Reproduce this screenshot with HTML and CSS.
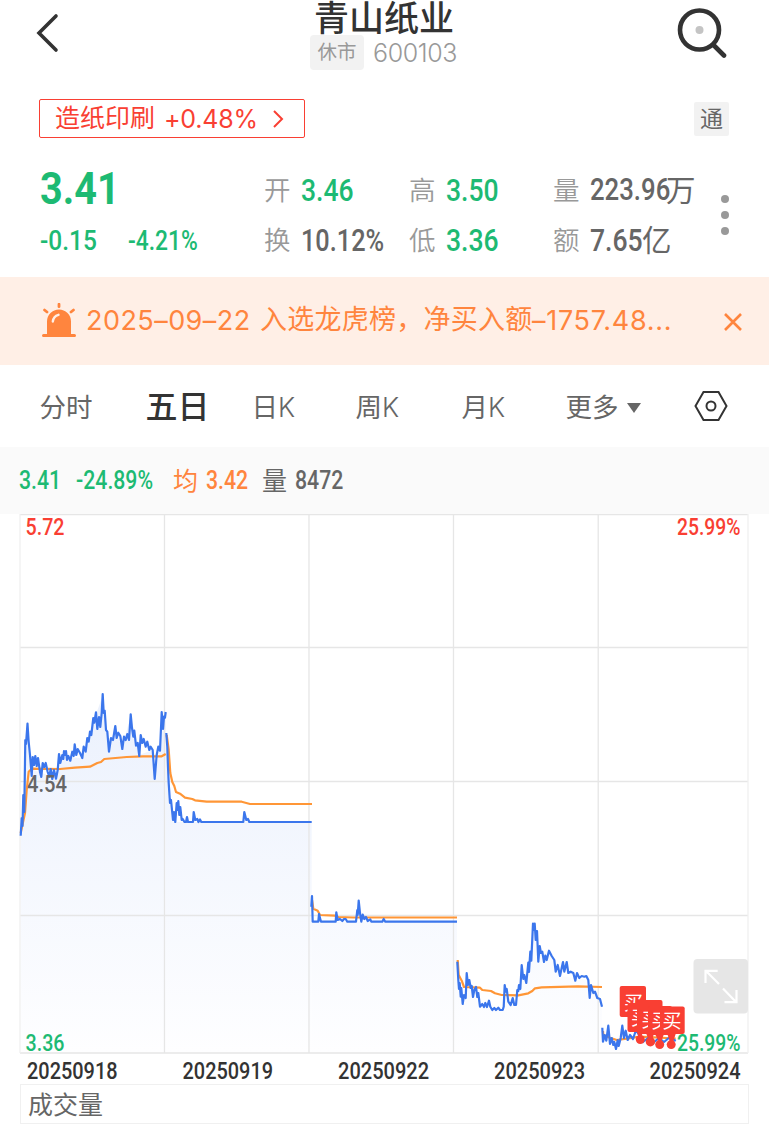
FILE: index.html
```html
<!DOCTYPE html>
<html lang="zh-CN">
<head>
    <meta charset="UTF-8">
    <meta name="viewport" content="width=device-width, initial-scale=1.0">
    <title>青山纸业 600103</title>
    <link rel="stylesheet" href="styles.css">
</head>
<body>
    <header class="header">
        <svg class="back" width="24" height="40" viewBox="0 0 24 40"><path d="M20 3L3 20l17 17"/></svg>
        <div class="stock">
            <h1>青山纸业</h1>
            <div class="code"><span class="badge">休市</span><span class="code-num">600103</span></div>
        </div>
        <svg class="search" width="52" height="52" viewBox="0 0 52 52">
            <circle cx="23.5" cy="24" r="19.5"/>
            <path d="M37.500 39L48 49.500"/>
            <circle class="dot" cx="23.500" cy="24" r="4"/>
        </svg>
    </header>

    <div class="sector-row">
        <div class="sector">
            <span class="sector-name">造纸印刷</span><span class="sector-num">+0.48%</span>
            <svg width="12" height="20" viewBox="0 0 12 20"><path d="M2 2l8 8-8 8"/></svg>
        </div>
        <span class="tong">通</span>
    </div>

    <section class="quote">
        <div class="price"><span class="num big">3.41</span></div>
        <div class="cell"><label>开</label><span class="num green">3.46</span></div>
        <div class="cell"><label>高</label><span class="num green">3.50</span></div>
        <div class="cell"><label>量</label><span class="num vol">223.96</span><span class="unit">万</span></div>
        <div class="change"><span class="num diff">-0.15</span><span class="num">-4.21%</span></div>
        <div class="cell"><label>换</label><span class="num pct">10.12%</span></div>
        <div class="cell"><label>低</label><span class="num green">3.36</span></div>
        <div class="cell"><label>额</label><span class="num amount">7.65</span><span class="unit">亿</span></div>
        <div class="dots"><i></i><i></i><i></i></div>
    </section>

    <div class="notice">
        <svg class="alarm" width="34" height="36" viewBox="0 0 34 36">
            <path d="M5 31V18.500a12 12 0 0 1 24 0V31h3.500a1.500 1.500 0 0 1 0 3h-31a1.500 1.500 0 0 1 0-3z"/>
            <path class="ray" d="M17 1.200v2.500M2.500 7l2.500 2M31.500 7L29 9"/>
            <path class="shine" d="M10.800 18.500c.4-3.500 2.600-5.800 5.700-6.700"/>
        </svg>
        <p><span class="date">2025–09–22</span><span class="event">入选龙虎榜，净买入额</span><span class="money">–1757.48...</span></p>
        <svg class="close" width="20" height="20" viewBox="0 0 20 20"><path d="M2 2l16 16M18 2L2 18"/></svg>
    </div>

    <nav class="tabs">
        <span>分时</span>
        <span class="active">五日</span>
        <span>日<b>K</b></span>
        <span>周<b>K</b></span>
        <span>月<b>K</b></span>
        <span>更多<i class="arrow"></i></span>
        <svg width="34" height="32" viewBox="0 0 34 32">
            <path d="M9.500 2h15L32.500 16l-8 14h-15L1.500 16z"/>
            <circle cx="17" cy="16" r="4.500"/>
        </svg>
    </nav>

    <div class="summary">
        <span class="num s1">3.41</span>
        <span class="num s2">-24.89%</span>
        <span class="avg">均</span>
        <span class="num avg s3">3.42</span>
        <span class="hand">量</span>
        <span class="num hand">8472</span>
    </div>

    <div class="chart">
        <svg width="769" height="570" viewBox="0 514 769 570">
            <defs>
                <linearGradient id="fade" gradientUnits="userSpaceOnUse" x1="0" y1="694" x2="0" y2="1053">
                    <stop offset="0" stop-color="#ebf1fd"/>
                    <stop offset="1" stop-color="#fefeff"/>
                </linearGradient>
                <!-- five days of prices, one run per day -->
                <path id="d1" d="M20.700 835.700L21.700 818 22.500 826 23.300 795 24.300 812 25.300 740 26 744 27.500 723.500 28.600 741 30 755 31.700 776 32.700 757 34 765 35.300 756 36.700 766 38 758 40 772 41.300 777 42.700 763 44.300 767 45.700 763 47.700 772 49.300 776.700 50.700 769 52.300 779 54 770 56 778.700 57.700 770 59 754 60.300 763 62.300 755 63.300 759 64 751 65 755 66 751 67 760 68.300 756 70.300 760.700 72.300 751.700 73.700 756 74.700 744.300 76.300 755 77.700 749 80 753 82.300 758 83.700 746.700 85.700 751.700 87.300 738 88.700 741.700 90 731.700 91.300 735 93.300 718 94.300 722.700 96 712.300 97.300 729 99 717 100.300 727 101.700 713 102.700 694 103.700 713 104.700 710.700 106 730 107.300 731.700 109 751.700 111 738 113 740 115.300 726 116.700 738 118.300 732.700 120.300 736 122.300 749 124 736.700 125.700 740 127.300 734 129 740 130.700 714.300 132 728 133.300 736.700 134.300 730.700 136 745.700 137.700 743 139.300 756 140.700 735 142.300 743 143.700 739 145.700 746.700 147.300 741.700 149.300 750 150.700 746.700 152.700 750 154.700 779 156.700 755 158.300 746.700 160 750.700 161.700 712 163 729 164 716.700 165 717.700 165.700 712"/>
                <path id="d2" d="M166.300 733L167.300 747 168 767 168.700 783 170 803 171 800 172 810 173 820 174 812 175.300 822 176.700 803 177.300 810 178.300 801 179.300 815 180.300 807 181.700 820 182.700 819 184.500 822 186 822 187 817 188 822 193 822 193.700 812 195.300 820 197.300 819 198.500 822 200 819.500 201.300 822 243.300 822 244.300 812 246.300 820 248 819 249.300 822 311.700 822"/>
                <path id="d3" d="M311.300 906.700L312 896 312.700 921.700 318.300 921.700 319 914 320 918 321 921.700 335.700 921.700 336.300 912.300 337.700 920 340 919 342.300 921 344 919 345.700 919 347.300 921.700 356 921.700 357.300 910 357.700 915 358.700 900.700 360 913 361.300 921.700 362.700 914.700 364.300 919 366 917 367.700 921 370.300 919.300 371.300 921.700 382.300 921.700 383.700 919 385.300 921.700 457 921.700"/>
                <path id="d4" d="M457.300 961.700L458.300 980 459 989 459.700 983 460.700 996.700 461.300 988 462.700 1004 464 995 465.700 998 466.700 973 468 985 469.300 980 470.700 988 471.700 986 473 997 474.300 990 476 987 477.300 997 478.300 993 480 1006.700 482.300 1004 484 1007 485.300 1003 487 1007 489 1000.700 490.300 1006.700 492.300 1010 494.300 1008 496 1010 498.300 1007.700 500 1010 502.700 1010 503.700 1006.700 504.700 985 505.700 991.700 506.700 989 508.300 1001.700 510.700 1005 512.700 998 514.300 1005 516 1005 517.300 990 518.300 991 519 985 520.300 989 521.700 965 523.300 979 524.300 975 526.300 983 528.300 962.700 529 972 530.300 951.700 531.300 960.700 533 923.500 534 930 534.700 923.500 535.700 940 537 931 538.300 961.700 539.700 946 541 953 542.300 951.700 544 962 545.300 955.700 546.700 960 549 950.700 551.700 956 554.300 960 555.700 971.700 557.700 965 560 976 561.700 968 563 962 564.300 971.700 566.700 962 568.300 973 570.700 971.700 573.300 973 575.300 980.700 577 973 579.300 978 581.700 976 584.300 976.700 586.300 976 588.300 980 589.700 998 591 985 593.300 993 595 991.700 597.300 998 600 999 602 1006.700"/>
                <path id="d5" d="M602.300 1027.700L603 1041.700 604.700 1035 606.300 1040.700 608.300 1025.700 610 1044 611.700 1038 613.300 1045 614.300 1042 616 1049 617.700 1040 618.700 1046 620.700 1038 622.300 1025.700 624 1038 625.700 1030.700 627.700 1040 630 1035 633 1039 636 1030 639 1035 643 1042 648 1038 653 1043 659 1038 664 1042 670 1037 675.700 1041"/>
            </defs>

            <g class="fill">
                <path d="M20.700 1053V835.700L23.300 795 27.500 723.500 32 770 40 772 56 779 59 757 82 758 96 714 102.700 696 109 750 115 728 122 748 130.700 716 139 755 152.700 750 154.700 779 163 727 165.700 712V1053z"/>
                <path d="M165.700 1053V733L170 803 175.300 822H311.700V1053z"/>
                <path d="M311.700 1053V921.700H457V1053z"/>
                <path d="M457 1053V961.700L462.700 1004 466.700 980 480 1006 503 1010 505 991 515 1005 521.700 970 526 983 533 924 538 955 549 952 560 976 588 980 602 1007V1053z"/>
                <path d="M602 1053V1030L616 1047 623 1032 640 1037 675 1041V1053z"/>
            </g>

            <path class="grid" d="M20 514.500H748M20 647.500H748M20 781.500H748M20 915.500H748M20 1053H748M164.500 514V1053M309 514V1053M453.500 514V1053M598.200 514V1053"/>
            <path class="edge" d="M20 514V1053M748 514V1053"/>

            <g class="line average">
                <path d="M20.700 833L25 813 26.700 790 28.700 771.700 31.700 768.700 60 769 75 767.600 90 766.700 97.300 763 101 762 104.300 759 126.700 757 143 756.300H161.700L165.700 754"/>
                <path d="M166.700 735L168.700 750 170.300 773 172.300 782 174.300 786 176 792 180 793.700 185 797.700 192.300 799 195 800.300 206.700 801.700H241.700L250 804H312"/>
                <path d="M312 900L313.300 908.700 317.700 910.700 320 915 335 915.700 338.300 917 353 917.500H457"/>
                <path d="M457.700 960L458.700 975 461.700 980.700 464 987 480 987.700 482.300 990 491 991 495 993.300 501.700 995 518.300 995.300 528.300 993.300 532.300 991 535 988.300 541.700 987.300 578 986.300 602 987"/>
                <path d="M603 1031L603.300 1035 610 1037.700 616.700 1040 626.700 1038.700 640 1036.700 675.700 1038.500"/>
            </g>
            <g class="line price-line">
                <use href="#d1"/><use href="#d2"/><use href="#d3"/><use href="#d4"/><use href="#d5"/>
            </g>
            <text class="mid" x="27" y="792" textLength="40" lengthAdjust="spacingAndGlyphs">4.54</text>

            <!-- buy marks -->
            <g class="buy">
                <rect x="619.700" y="986" width="26.300" height="31" rx="2"/><text x="624" y="1010">买</text>
                <rect x="627.500" y="1003" width="26" height="29" rx="2"/><text x="631" y="1025">买</text>
                <path d="M637 1031h6l-2 8h-2z"/><circle cx="640.300" cy="1039.500" r="4.500"/>
                <rect x="637" y="1000" width="25.500" height="34" rx="2"/><text x="641.500" y="1027">买</text>
                <path d="M646 1033h8l-2 8h-3z"/><circle cx="650.400" cy="1041.700" r="4.700"/>
                <rect x="648" y="1006" width="24" height="29" rx="2"/><text x="651.500" y="1028">买</text>
                <path d="M655 1034h9l-3 8h-2z"/><circle cx="659.700" cy="1044.600" r="4.500"/>
                <rect x="660" y="1006.500" width="24.700" height="27.500" rx="2"/><text x="662.500" y="1027.500">买</text>
                <path d="M667 1033h9l-3 9h-3z"/><circle cx="671.200" cy="1044.600" r="4.500"/>
            </g>

            <g class="expand">
                <rect x="693.500" y="959" width="54.500" height="54.500" rx="4"/>
                <path d="M719 984L706 971M705.500 983V970.800H717.700M723 988.500L736 1002M736.500 990V1002.200H724.500"/>
            </g>

            <text class="up" x="25.500" y="534.500" textLength="39" lengthAdjust="spacingAndGlyphs">5.72</text>
            <text class="up" x="677" y="534.500" textLength="63.500" lengthAdjust="spacingAndGlyphs">25.99%</text>
            <text class="down" x="25.500" y="1051" textLength="39" lengthAdjust="spacingAndGlyphs">3.36</text>
            <text class="down" x="677" y="1051" textLength="63.500" lengthAdjust="spacingAndGlyphs">25.99%</text>

            <g class="days">
                <text x="27" y="1078.500" textLength="90.500" lengthAdjust="spacingAndGlyphs">20250918</text>
                <text x="182.500" y="1078.500" textLength="90.500" lengthAdjust="spacingAndGlyphs">20250919</text>
                <text x="338" y="1078.500" textLength="91" lengthAdjust="spacingAndGlyphs">20250922</text>
                <text x="494" y="1078.500" textLength="91" lengthAdjust="spacingAndGlyphs">20250923</text>
                <text x="649.500" y="1078.500" textLength="91" lengthAdjust="spacingAndGlyphs">20250924</text>
            </g>
        </svg>
    </div>

    <div class="volume">成交量</div>
</body>
</html>
```
FILE: styles.css
```css
*{
    margin: 0;
    padding: 0;
    box-sizing: border-box;
}

:root{
    --green: #1dba73;
    --red: #f93f33;
    --orange: #ff853e;
    --gray: #666;
}

body{
    width: 769px;
    height: 1124px;
    overflow: hidden;
    background: #fff;
    color: #333;
    font-family: Inter, 'Noto Sans CJK SC', sans-serif;
}

svg{
    display: block;
    flex: none;
    fill: none;
}

i, b{
    font-style: normal;
    font-weight: inherit;
}

/* narrow digits */
.num{
    display: inline-block;
    font-family: Roboto, 'Liberation Sans', sans-serif;
    font-weight: 500;
    white-space: nowrap;
    transform: scaleX(.83);
    transform-origin: 0 50%;
}

.header{
    display: flex;
    height: 85px;
    padding: 0 41px 0 36px;
}

.back{
    margin-top: 13px;
    stroke: #333;
    stroke-width: 3.6;
    stroke-linecap: round;
}

.stock{
    flex: 1;
    padding-left: 250px;
}

h1{
    height: 35px;
    padding-left: 4px;
    font-size: 35px;
    font-weight: 500;
    line-height: 37px;
    white-space: nowrap;
}

.code{
    display: flex;
    align-items: center;
    gap: 9px;
    height: 35px;
    color: #999;
}

.badge{
    width: 54px;
    height: 35px;
    border-radius: 4px;
    background: #f2f2f2;
    font-size: 19.5px;
    line-height: 35px;
    text-align: center;
}

.code-num{
    font-size: 25px;
    font-weight: 300;
    letter-spacing: -.4px;
}

.search{
    margin-top: 6px;
    stroke: #333;
    stroke-width: 4.6;
    stroke-linecap: round;
}

.search .dot{
    fill: #c4c4c4;
    stroke: none;
}

.sector-row{
    display: flex;
    justify-content: space-between;
    height: 65px;
    padding: 14px 40px 0 39px;
}

.sector{
    display: flex;
    align-items: center;
    width: 266px;
    height: 39px;
    padding-left: 15px;
    border: 1.5px solid var(--red);
    border-radius: 2px;
    color: var(--red);
    font-size: 25px;
}

.sector-name{
    width: 101px;
    line-height: 34px;
    margin-top: -2px;
}

.sector-num{
    width: 116px;
    padding-left: 8px;
    letter-spacing: -.2px;
}

.sector svg{
    stroke: var(--red);
    stroke-width: 2;
}

.tong{
    width: 35px;
    height: 34px;
    margin-top: 3px;
    border-radius: 2px;
    background: #f2f2f2;
    color: var(--gray);
    font-size: 23px;
    line-height: 35px;
    text-align: center;
}

.quote{
    position: relative;
    display: grid;
    grid-template-columns: 224px 145px 144px 1fr;
    grid-template-rows: 50px 50px;
    height: 127px;
    padding: 15px 0 0 40px;
    align-items: center;
}

.price, .change{
    color: var(--green);
}

.price{
    height: 50px;
    line-height: 50px;
}

.big{
    font-size: 43.5px;
    font-weight: 700;
    transform: scaleX(.91);
}

.change{
    display: flex;
    font-size: 27.5px;
}

.change .num{
    width: 88px;
}

.change .diff{
    transform: scaleX(.89);
}

.cell{
    display: flex;
    align-items: center;
    height: 50px;
    color: var(--gray);
    font-size: 32px;
    line-height: 50px;
}

.cell label{
    width: 37px;
    color: #999;
    font-size: 26.5px;
    font-weight: 350;
}

.green{
    color: var(--green);
}

.pct{
    transform: scaleX(.79);
}

.vol{
    width: 76px;
    font-size: 31px;
}

.amount{
    width: 52px;
}

.unit{
    font-size: 29.5px;
}

.dots{
    position: absolute;
    top: 45px;
    left: 721px;
    display: grid;
    gap: 8px;
}

.dots i{
    width: 8px;
    height: 8px;
    border-radius: 50%;
    background: #999;
}

.notice{
    display: flex;
    align-items: center;
    height: 88px;
    padding: 0 26px 0 42px;
    background: #ffefe6;
    color: var(--orange);
}

.alarm{
    fill: var(--orange);
}

.ray{
    stroke: var(--orange);
    stroke-width: 2.8;
    stroke-linecap: round;
}

.shine{
    fill: none;
    stroke: #ffefe6;
    stroke-width: 2.4;
    stroke-linecap: round;
}

.notice p{
    display: flex;
    flex: 1;
    align-items: center;
    padding-left: 10px;
    font-size: 27px;
    line-height: 40px;
    white-space: nowrap;
}

.date{
    width: 174px;
    letter-spacing: .45px;
}

.event{
    width: 272px;
    margin-top: -2px;
    letter-spacing: .25px;
}

.money{
    letter-spacing: .7px;
}

.close{
    margin-top: 1px;
    stroke: var(--orange);
    stroke-width: 2.6;
}

.tabs{
    display: grid;
    grid-template-columns: 106px 106px 104px 106px 104px 128px 1fr;
    align-items: center;
    height: 82px;
    padding-left: 40px;
    color: var(--gray);
    font-size: 26.5px;
    line-height: 40px;
}

.tabs > span{
    margin-left: -.5px;
    padding-top: 2px;
}

.tabs .active{
    color: #333;
    font-size: 32px;
    font-weight: 500;
}

.tabs b{
    font-weight: 300;
}

.arrow{
    display: inline-block;
    margin: 0 0 4px 8px;
    border: 7px solid transparent;
    border-top: 10px solid var(--gray);
    border-bottom: 0;
}

.tabs svg{
    stroke: #333;
    stroke-width: 2;
}

.summary{
    display: flex;
    align-items: center;
    height: 67px;
    padding-left: 19px;
    background: #fafafa;
    color: var(--green);
    font-size: 25px;
}

.summary .num{
    transform: scaleX(.85);
}

.s1{
    width: 57px;
}

.s2{
    width: 97px;
}

.s3{
    width: 56px;
}

.summary .avg{
    color: var(--orange);
}

.summary .hand{
    color: var(--gray);
}

.summary .avg:not(.num), .summary .hand:not(.num){
    width: 33px;
    margin-top: -4px;
}

.chart text{
    font-family: Roboto, 'Liberation Sans', sans-serif;
    font-size: 24px;
    font-weight: 500;
}

.fill{
    fill: url(#fade);
}

.grid{
    stroke: #e6e6e6;
    stroke-width: 1.3;
}

.edge{
    stroke: #f0f0f0;
    stroke-width: 1.3;
}

.line{
    stroke-width: 2.2;
    stroke-linejoin: round;
}

.average{
    stroke: #ff9636;
}

.price-line{
    stroke: #3b76ec;
}

.buy{
    fill: var(--red);
}

.chart .buy text{
    fill: #fff;
    font-family: 'Noto Sans CJK SC', sans-serif;
    font-size: 19px;
    font-weight: 400;
}

.expand rect{
    fill: #e6e6e6;
}

.expand path{
    stroke: #fff;
    stroke-width: 2.2;
}

.chart .mid{
    fill: var(--gray);
}

.up{
    fill: var(--red);
}

.down{
    fill: var(--green);
}

.days{
    fill: #333;
}

.volume{
    width: 729px;
    height: 40px;
    margin-left: 20px;
    padding-left: 7px;
    border: 1px solid #f0f0f0;
    color: var(--gray);
    font-size: 25px;
    line-height: 40px;
}
```
